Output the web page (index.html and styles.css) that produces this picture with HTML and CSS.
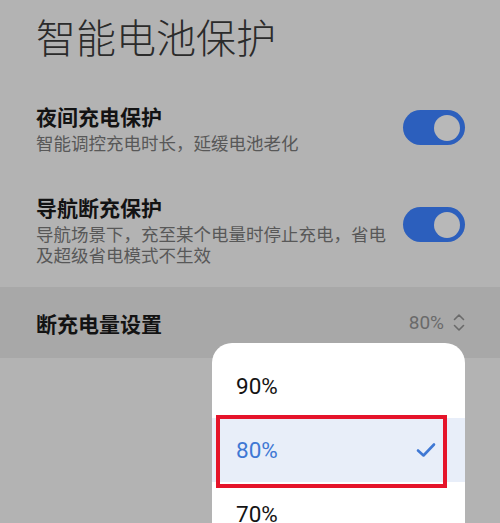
FILE: index.html
```html
<!DOCTYPE html>
<html>
<head>
    <title>智能电池保护</title>
    <link rel="stylesheet" href="styles.css">
</head>
<body>
<div class="page">
    <h1 class="page-title">智能电池保护</h1>

    <div class="setting">
        <div class="setting-text">
            <div class="setting-name">夜间充电保护</div>
            <div class="setting-desc">智能调控充电时长，延缓电池老化</div>
        </div>
        <div class="toggle"><span class="knob"></span></div>
    </div>

    <div class="setting setting-second">
        <div class="setting-text">
            <div class="setting-name">导航断充保护</div>
            <div class="setting-desc">导航场景下，充至某个电量时停止充电，省电及超级省电模式不生效</div>
        </div>
        <div class="toggle"><span class="knob"></span></div>
    </div>

    <div class="select-row">
        <div class="setting-name">断充电量设置</div>
        <div class="select-value">
            80%
            <svg class="updown" width="12" height="19" viewBox="0 0 12 19">
                <path d="M1.5 6.5 L6 2 L10.5 6.5" fill="none" stroke="#6a6a6a" stroke-width="1.6" stroke-linecap="round" stroke-linejoin="round"/>
                <path d="M1.5 12.5 L6 17 L10.5 12.5" fill="none" stroke="#6a6a6a" stroke-width="1.6" stroke-linecap="round" stroke-linejoin="round"/>
            </svg>
        </div>
    </div>

    <!-- dropdown popup over the list -->
    <div class="dropdown">
        <div class="option">90%</div>
        <div class="option option-active">
            80%
            <svg class="check" width="20" height="16" viewBox="0 0 20 16">
                <path d="M2 8.5 L7.5 13.5 L18 2.5" fill="none" stroke="#3f78d4" stroke-width="2.6" stroke-linecap="round" stroke-linejoin="round"/>
            </svg>
        </div>
        <div class="option">70%</div>
    </div>
    <div class="highlight-box"></div>
</div>
</body>
</html>
```

FILE: styles.css
```css
body {
    margin: 0;
    padding: 0;
    background-color: #b3b3b3;
    font-family: "Noto Sans CJK SC", "Noto Sans", sans-serif;
    overflow: hidden;
}

.page {
    position: relative;
    width: 500px;
    height: 523px;
    overflow: hidden;
}

.page-title {
    margin: 0;
    padding: 9px 0 0 36px;
    font-size: 40px;
    line-height: 54px;
    font-weight: 300;
    color: #2b2b2b;
    letter-spacing: 0;
}

.setting {
    display: flex;
    align-items: center;
    justify-content: space-between;
    padding: 0 35px 0 36px;
    margin-top: 39px;
}

.setting-second {
    margin-top: 40px;
    align-items: flex-start;
}

.setting-second .toggle {
    margin-top: 14px;
}

.setting-text {
    width: 358px;
}

.setting-name {
    font-size: 21px;
    line-height: 28px;
    font-weight: bold;
    color: #131313;
}

.setting-desc {
    font-size: 17.5px;
    line-height: 21px;
    color: #585858;
    margin-top: 2px;
}

.toggle {
    width: 62px;
    height: 35px;
    border-radius: 18px;
    background-color: #2c5fbd;
    display: flex;
    align-items: center;
    justify-content: flex-end;
    padding-right: 5px;
    box-sizing: border-box;
    flex-shrink: 0;
}

.knob {
    width: 26px;
    height: 26px;
    border-radius: 50%;
    background-color: #b8b8b8;
}

.select-row {
    margin-top: 22px;
    height: 71px;
    background-color: #a8a8a8;
    display: flex;
    align-items: center;
    justify-content: space-between;
    padding: 0 35px 0 36px;
}

.select-value {
    display: flex;
    align-items: center;
    gap: 9px;
    font-family: "Roboto", sans-serif;
    font-size: 19px;
    color: #6a6a6a;
}

.dropdown {
    position: absolute;
    left: 212px;
    top: 343px;
    width: 253px;
    height: 220px;
    background-color: #fff;
    border-radius: 20px;
    padding-top: 11px;
    box-sizing: border-box;
}

.option {
    height: 64px;
    display: flex;
    align-items: center;
    justify-content: space-between;
    padding: 0 29px 0 24px;
    font-family: "Roboto", sans-serif;
    font-size: 22.5px;
    color: #141414;
}

.option-active {
    background-color: #e8eef9;
    color: #3f78d4;
}

.highlight-box {
    position: absolute;
    left: 216px;
    top: 415px;
    width: 231px;
    height: 73px;
    border: 4px solid #e5142a;
    box-sizing: border-box;
}
```
